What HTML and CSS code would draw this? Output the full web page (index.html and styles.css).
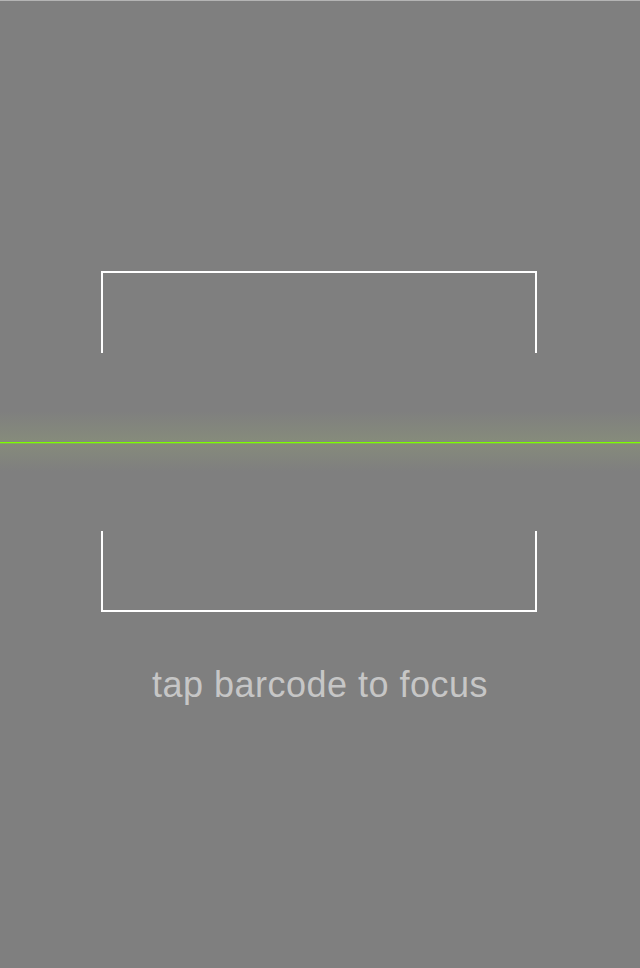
FILE: index.html
```html
<!DOCTYPE html>
<html>
<head>
<meta charset="utf-8">
<link rel="stylesheet" href="styles.css">
</head>
<body>
<div class="screen">
  <div class="bracket bracket-top"></div>
  <div class="scan-band">
    <div class="scan-line"></div>
  </div>
  <div class="bracket bracket-bottom"></div>
  <p class="hint">tap barcode to focus</p>
</div>
</body>
</html>
```
FILE: styles.css
```css
html, body {
  margin: 0;
  padding: 0;
  background: #7f7f7f;
}
.screen {
  width: 640px;
  height: 968px;
  box-sizing: border-box;
  background: #7f7f7f;
  border-top: 1px solid #b4b4b4;
  padding-top: 270px;
  display: flex;
  flex-direction: column;
  overflow: hidden;
}
.bracket {
  margin-left: 101px;
  width: 436px;
  box-sizing: border-box;
  border: 2px solid #ffffff;
}
.bracket-top {
  height: 82px;
  border-bottom: none;
}
.bracket-bottom {
  height: 81px;
  border-top: none;
}
.scan-band {
  height: 178px;
  display: flex;
  flex-direction: column;
  justify-content: center;
  background: linear-gradient(to bottom,
    rgba(128,128,128,0) 0px,
    rgba(128,128,128,0) 58px,
    rgba(140,150,120,0.55) 89px,
    rgba(128,128,128,0) 118px,
    rgba(128,128,128,0) 178px);
}
.scan-line {
  height: 1px;
  margin-top: 1px;
  background: #7dff00;
  box-shadow: 0 1px 0 rgba(125,255,0,0.3);
}
.hint {
  margin: 53px 0 0;
  font-family: "Liberation Sans", Arial, sans-serif;
  font-size: 36px;
  line-height: 40px;
  letter-spacing: 0.5px;
  color: #c6c6c6;
  text-align: center;
}
```
